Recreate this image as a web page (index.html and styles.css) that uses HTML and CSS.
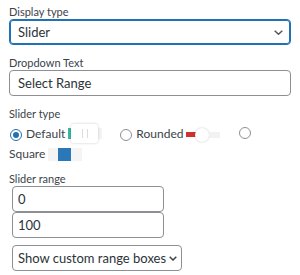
FILE: index.html
```html
<!DOCTYPE html>
<html>
<head>
    <link rel="stylesheet" href="styles.css">
</head>
<body>
    <div class="panel">
        <!-- Display type -->
        <div class="field">
            <label class="label">Display type</label>
            <div class="select select-focus">
                <span>Slider</span>
                <svg class="chevron" width="9" height="5" viewBox="0 0 9 5"><path d="M0.7 0.7 L4.5 4.2 L8.3 0.7" fill="none" stroke="#50575e" stroke-width="1.5"/></svg>
            </div>
        </div>

        <!-- Dropdown text -->
        <div class="field">
            <label class="label">Dropdown Text</label>
            <input class="text-input" type="text" value="Select Range" />
        </div>

        <!-- Slider type -->
        <div class="field field-options">
            <label class="label">Slider type</label>
            <div class="options">
                <label class="opt"><span class="radio checked"></span>Default<span class="prev prev-default"><span class="fill"></span><span class="thumb"><i></i><i></i></span></span></label>
                <label class="opt"><span class="radio"></span>Rounded<span class="prev prev-rounded"><span class="fill"></span><span class="knob"></span></span></label>
                <label class="opt"><span class="radio radio-last"></span> Square<span class="prev prev-square"><span class="block"></span></span></label>
            </div>
        </div>

        <!-- Range -->
        <div class="field range">
            <label class="label">Slider range</label>
            <input class="text-input small" type="text" value="0" />
            <input class="text-input small" type="text" value="100" />
            <div class="select small-select">
                <span>Show custom range boxes</span>
                <svg class="chevron" width="8" height="5" viewBox="0 0 8 5"><path d="M0.7 0.7 L4 4 L7.3 0.7" fill="none" stroke="#3c434a" stroke-width="1.5"/></svg>
            </div>
        </div>
    </div>
</body>
</html>
```

FILE: styles.css
```css
body {
    margin: 0;
    background-color: #fff;
    font-family: Lato, "Open Sans", sans-serif;
    color: #3c434a;
}

.panel {
    width: 282px;
    padding: 5px 9px 0 9px;
}

.field {
    margin-bottom: 11px;
}

.field-options {
    margin-bottom: 8px;
}

.label {
    display: block;
    font-size: 11px;
    line-height: 14px;
    color: #3c434a;
}

/* Selects and inputs */
.select {
    display: flex;
    align-items: center;
    justify-content: space-between;
    box-sizing: border-box;
    height: 26px;
    padding: 0 7px 0 8px;
    border: 1px solid #8c8f94;
    border-radius: 4px;
    font-size: 13px;
    color: #2c3338;
    white-space: nowrap;
    background-color: #fff;
}

.select-focus {
    border-color: #2271b1;
    box-shadow: inset 0 0 0 1px #2271b1;
}

.text-input {
    display: block;
    box-sizing: border-box;
    width: 100%;
    height: 26px;
    margin: 0;
    padding: 0 8px;
    border: 1px solid #8c8f94;
    border-radius: 4px;
    font-family: inherit;
    font-size: 13px;
    color: #2c3338;
    outline: none;
}

/* Slider type options */
.options {
    margin-top: 3px;
    font-size: 12px;
    line-height: 20px;
}

.opt {
    margin-right: 14px;
}

.radio {
    display: inline-block;
    box-sizing: border-box;
    width: 12px;
    height: 12px;
    margin: 0 4px 0 1px;
    border: 1px solid #8c8f94;
    border-radius: 50%;
    vertical-align: middle;
    position: relative;
}

.radio-last {
    top: -2px;
}

.radio.checked {
    border-color: #2271b1;
}

.radio.checked::after {
    content: "";
    position: absolute;
    left: 2px;
    top: 2px;
    width: 6px;
    height: 6px;
    border-radius: 50%;
    background-color: #2271b1;
}

.prev {
    display: inline-flex;
    align-items: center;
    width: 34px;
    height: 20px;
    margin: -6px 0 -4px 3px;
    vertical-align: middle;
}

.prev-default {
    background: linear-gradient(#f4f4f4, #f4f4f4) no-repeat 0 4px / 100% 11px;
}

.prev-default .fill {
    width: 3px;
    height: 11px;
    background-color: #3bb9a0;
}

.prev-default .thumb {
    display: flex;
    justify-content: center;
    gap: 4px;
    align-items: center;
    width: 27px;
    height: 19px;
    background-color: #fff;
    border-radius: 3px;
    box-shadow: 0 0 3px rgba(0, 0, 0, 0.2);
}

.prev-default .thumb i {
    width: 1px;
    height: 9px;
    background-color: #ddd;
}

.prev-rounded {
    margin: -5px 0 -5px 3px;
}

.prev-rounded .fill {
    width: 10px;
    height: 5px;
    background-color: #d0312d;
}

.prev-rounded .knob {
    width: 14px;
    height: 14px;
    margin-left: -1px;
    border-radius: 50%;
    background-color: #fff;
    box-shadow: 0 0 2px rgba(0, 0, 0, 0.25);
}

.prev-rounded::after {
    content: "";
    flex: 1;
    height: 6px;
    background-color: #f2f2f2;
}

.prev-square {
    height: 13px;
    margin: 0 0 0 3px;
    background-color: #f4f4f4;
}

.prev-square .block {
    width: 13px;
    height: 13px;
    margin-left: 10px;
    background-color: #2b78b8;
}

/* Range boxes */
.range .text-input.small {
    width: 152px;
    margin-left: 3px;
    padding: 0 5px;
}

.small-select {
    width: 170px;
    margin: 7px 0 0 3px;
    padding: 0 4px 0 5px;
}
```
